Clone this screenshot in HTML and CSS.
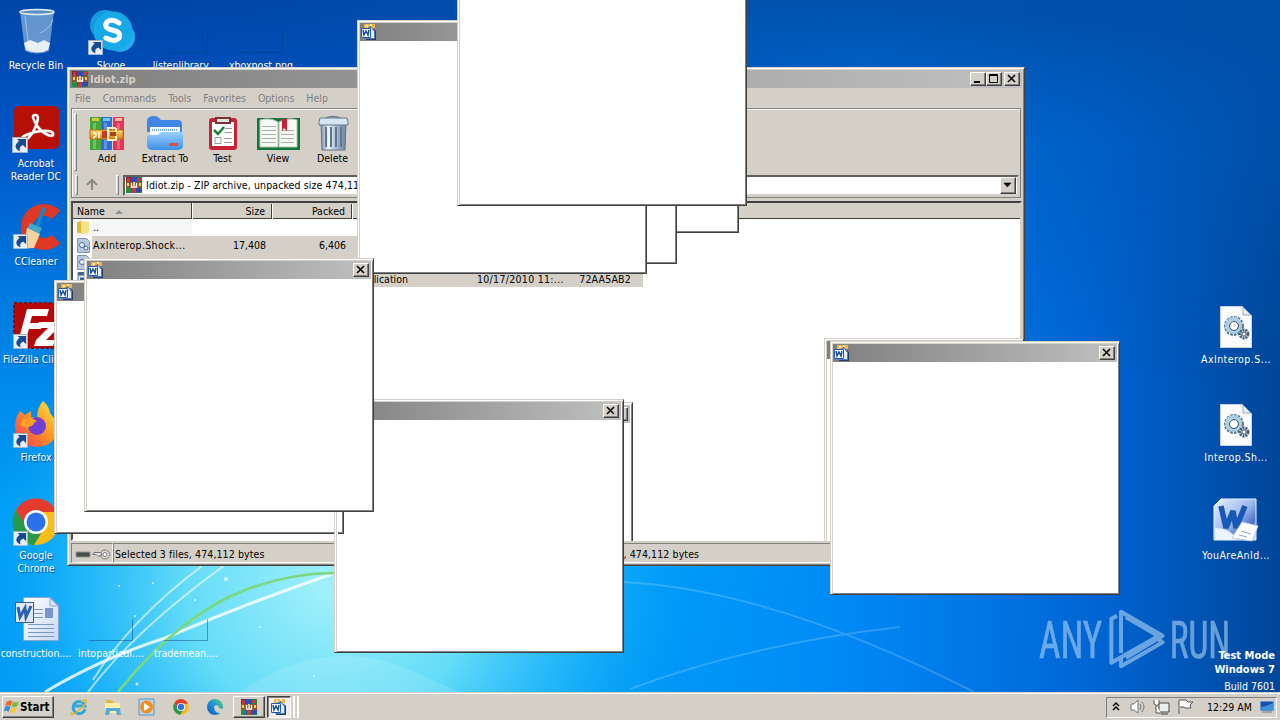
FILE: index.html
```html
<!DOCTYPE html>
<html lang="en">
<head>
<meta charset="utf-8">
<title>Desktop</title>
<link rel="stylesheet" href="styles.css">
</head>
<body>
<svg class="defs" aria-hidden="true">
  <defs>
    <linearGradient id="steel" x1="0" x2="1" y1="0" y2="0"><stop offset="0" stop-color="#7d93ab"/><stop offset=".3" stop-color="#f2f7fc"/><stop offset=".6" stop-color="#a9bdd2"/><stop offset="1" stop-color="#6c839c"/></linearGradient>
    <linearGradient id="folder" x1="0" x2="0" y1="0" y2="1"><stop offset="0" stop-color="#9bd0ff"/><stop offset="1" stop-color="#3d8fe8"/></linearGradient>
    <linearGradient id="edge" x1="0" x2="1" y1="1" y2="0"><stop offset="0" stop-color="#0b55b5"/><stop offset=".5" stop-color="#1894dc"/><stop offset="1" stop-color="#5ad66a"/></linearGradient>
    <linearGradient id="fox" x1="1" x2="0" y1="0" y2="1"><stop offset="0" stop-color="#fff04a"/><stop offset=".45" stop-color="#ff9a20"/><stop offset="1" stop-color="#f0305c"/></linearGradient>
    <linearGradient id="doc" x1="0" x2="1" y1="0" y2="1"><stop offset="0" stop-color="#fff"/><stop offset="1" stop-color="#c6d9f5"/></linearGradient>
    <linearGradient id="wtile" x1="0" x2="1" y1="0" y2="1"><stop offset="0" stop-color="#e8f1ff"/><stop offset=".5" stop-color="#9cb9ed"/><stop offset=".75" stop-color="#4b6fc4"/><stop offset="1" stop-color="#dfe8f8"/></linearGradient>
    <linearGradient id="binding" x1="0" x2="0" y1="0" y2="1"><stop offset="0" stop-color="#ffe06a"/><stop offset="1" stop-color="#d9801c"/></linearGradient>
    <symbol id="arrow" viewBox="0 0 16 16"><path fill="#e9eef5" stroke="#9fb4cc" d="M.5.5h15v15H.5z"/><path fill="#174a93" d="M5 2h9v9l-3-3c-3 1-4 3-3 6-4-1-6-5-3-8 1-1 1-1 2-2z"/></symbol>
    <symbol id="rar" viewBox="0 0 16 16"><path fill="#8e1d2f" d="M0 0h5v16H0z"/><path fill="#2c50b8" d="M5 0h6v16H5z"/><path fill="#218438" d="M11 0h5v16h-5z"/><path fill="#c23c3b" d="M1 1h3v4H1zM6 11h4v5H6zM11 1h4v3h-4z"/><path fill="#219045" d="M0 11h5v5H0z"/><path fill="#2d4bab" d="M11 11h5v4h-5z"/><path fill="#8c5728" d="M0 5h16v6H0z"/><path fill="#f0c774" d="M1 6h2v3H1zM13 6h2v3h-2z"/><path fill="none" stroke="#fff" stroke-width="1.300" d="M5.500 6v4h5V6M8 5v4"/></symbol>
    <symbol id="word" viewBox="0 0 16 16"><path fill="#f4b34c" d="M3 0h11v4H3z"/><path fill="#fff0b5" d="M5 1h2v2H5zM9 0h2v2H9z"/><path fill="#253b65" d="M9 2l6 5v9H5v-2h4z"/><path fill="#e4efff" stroke="#4d7ac5" d="M7.500 3.500h3l3 4v7h-9z"/><path fill="#fff" stroke="#245ab2" d="M.5 4.500h9v9h-9z"/><path fill="none" stroke="#174d9e" stroke-width="1.500" d="M2 6l1 5 2-4 2 4 1-5"/></symbol>
    <symbol id="chrome" viewBox="0 0 48 48"><circle cx="24" cy="24" r="23" fill="#fbbc16"/><path fill="#e33b2e" d="M4 12A23 23 0 0 1 45 14H24L14 30z"/><path fill="#28994b" d="M4 12l12 19 14 3-8 13A23 23 0 0 1 4 12z"/><circle cx="24" cy="24" r="12" fill="#fff"/><circle cx="24" cy="24" r="9.500" fill="#2b72ea"/></symbol>
    <symbol id="gears" viewBox="0 0 32 42"><path fill="#fbfbfb" stroke="#c8d1dc" d="M.5.5h22l9 9v32H.5z"/><path fill="#e8f0f8" stroke="#8eaac6" d="M23 1v8h8z"/><circle cx="14" cy="20" r="8" fill="none" stroke="#5d7892" stroke-width="4" stroke-dasharray="2.400 1"/><circle cx="13.500" cy="19.500" r="6.500" fill="none" stroke="#a9cfe8" stroke-width="4"/><circle cx="14" cy="20" r="4.500" fill="none" stroke="#3f5364"/><circle cx="24" cy="28" r="4" fill="#d8edf8" stroke="#4c6376" stroke-width="3" stroke-dasharray="2 .8"/><circle cx="24" cy="28" r="2" fill="#fff" stroke="#526675"/></symbol>
    <symbol id="minidll" viewBox="0 0 13 15"><path fill="#b9c8e1" stroke="#7e92b5" d="M.5.5h9l3 3v11H.5z"/><circle cx="5" cy="7" r="2.500" fill="#eaf2ff" stroke="#49699c"/><circle cx="9" cy="10" r="2" fill="#eaf2ff" stroke="#49699c"/></symbol>
    <symbol id="close" viewBox="0 0 14 12"><path fill="none" stroke="#000" stroke-width="1.600" d="M3 2l7 7M10 2l-7 7"/></symbol>
  </defs>
</svg>

<main class="desktop">
  <svg class="wallpaper" viewBox="0 0 1280 692" preserveAspectRatio="none">
    <defs>
      <linearGradient id="base" x1="0" y1="0" x2="0" y2="1"><stop offset="0" stop-color="#0045a8"/><stop offset=".2" stop-color="#0056c6"/><stop offset=".45" stop-color="#007ee2"/><stop offset=".75" stop-color="#009ff6"/><stop offset="1" stop-color="#0099f5"/></linearGradient>
      <radialGradient id="glow" gradientUnits="userSpaceOnUse" cx="0" cy="0" r="1" gradientTransform="translate(330 590) scale(360 330)"><stop offset="0" stop-color="#a2f1fb"/><stop offset=".4" stop-color="#64dcf8"/><stop offset=".72" stop-color="#22b9fa" stop-opacity=".75"/><stop offset="1" stop-color="#08a0f8" stop-opacity="0"/></radialGradient>
      <linearGradient id="right"><stop offset=".48" stop-color="#0090ff" stop-opacity="0"/><stop offset=".68" stop-color="#0083f3" stop-opacity=".9"/><stop offset=".86" stop-color="#0064d2"/><stop offset="1" stop-color="#004698"/></linearGradient>
      <linearGradient id="top" gradientUnits="userSpaceOnUse" x1="800" y1="0" x2="770" y2="340"><stop offset="0" stop-color="#0050aa" stop-opacity=".95"/><stop offset=".35" stop-color="#0058b8" stop-opacity=".5"/><stop offset="1" stop-color="#0053b2" stop-opacity="0"/></linearGradient>
      <linearGradient id="fade"><stop offset=".1" stop-color="#000"/><stop offset=".45" stop-color="#fff"/></linearGradient>
      <mask id="soft"><path fill="url(#fade)" d="M0 0h1280v692H0z"/></mask>
    </defs>
    <path fill="url(#base)" d="M0 0h1280v692H0z"/>
    <path fill="url(#right)" d="M0 0h1280v692H0z"/>
    <path fill="url(#top)" mask="url(#soft)" d="M0 0h1280v692H0z"/>
    <path fill="url(#glow)" d="M0 240h700v452H0z"/>
    <path fill="#fff" opacity=".12" d="M240 692q80-55 160-26l60 26z"/>
    <g fill="none" stroke="#fff">
      <path stroke-width="3" opacity=".8" d="M45 692Q100 659 165 638Q250 602 335 573"/>
      <path stroke-width="2" opacity=".6" d="M88 692Q135 630 225 565M93 680Q130 620 202 566"/>
      <path stroke-width="2" opacity=".18" d="M624 582q150 8 350 110M630 689q120-45 270-62"/>
    </g>
    <path fill="none" stroke="#7bd87a" stroke-width="2.500" d="M118 692Q180 615 245 590Q290 573 335 573"/>
    <g fill="#fff" opacity=".75"><circle cx="226" cy="579" r="2"/><circle cx="119" cy="586" r="1"/><circle cx="153" cy="583" r="1"/><circle cx="195" cy="600" r="1"/><circle cx="135" cy="616" r="1"/><circle cx="260" cy="627" r="1"/><circle cx="137" cy="684" r="1.500"/><circle cx="314" cy="676" r="1"/></g>
  </svg>

  <div class="shortcut recycle"><svg viewBox="0 0 48 48"><path fill="#a9c9e4" opacity=".6" d="M8 3h34l-5 40q-12 5-24 0z"/><path fill="#e9eff3" d="M12 35l6-3 8 3 6-3 6 3-2 7q-10 5-22 0z"/><ellipse cx="25" cy="4" rx="17" ry="2.500" fill="#5b8fc0" stroke="#e1ecf2" stroke-width="1.500"/><path fill="none" stroke="#fff" opacity=".4" d="M13 8l4 32M41 11q-3 10-13 14"/></svg><span>Recycle Bin</span></div>
  <div class="shortcut skype"><svg viewBox="0 0 48 48"><circle cx="18" cy="17" r="15" fill="#139ddc"/><circle cx="33" cy="29" r="15" fill="#21adef"/><circle cx="26" cy="23" r="19.500" fill="#17a9e8"/><path fill="none" stroke="#fff" stroke-width="5" stroke-linecap="round" d="M32 15q-7-5-12-1-4 6 5 8 10 2 7 8-4 5-13 0"/><use href="#arrow" x="1" y="32" width="15" height="15"/></svg><span>Skype</span></div>
  <div class="shortcut lib"><i class="ghost"></i><span>listenlibrary....</span></div>
  <div class="shortcut xbox"><i class="ghost"></i><span>xboxpost.png</span></div>
  <div class="shortcut acrobat"><svg viewBox="0 0 48 48"><rect x="2" width="45" height="43" rx="5" fill="#b60f05"/><path fill="none" stroke="#fff" stroke-width="2.600" d="M24 9c4 0 1 10-3 17-5 8-10 10-11 7s10-7 19-8 13 1 12 4-12-2-17-11-3-9 0-9z"/><use href="#arrow" y="31" width="16" height="16"/></svg><span>Acrobat<br>Reader DC</span></div>
  <div class="shortcut ccleaner"><svg viewBox="0 0 48 48"><path fill="none" stroke="#df3925" stroke-width="12" d="M44 11A17 17 0 1 0 44 35"/><path stroke="#1788bd" stroke-width="4" d="M32 4L24 25"/><path fill="#48a5c9" d="M18 19l12 5-3 6-12-5z"/><path fill="#f3d3a0" d="M15 24l13 6-6 14-16 1q8-10 9-21z"/><use href="#arrow" x="1" y="30" width="15" height="15"/></svg><span>CCleaner</span></div>
  <div class="shortcut filezilla"><svg viewBox="0 0 48 48"><path fill="#b50808" stroke="#8c0710" stroke-width="2" stroke-dasharray="3 2" d="M2 1h45v45H2z"/><path fill="#fff" d="M15 7h22l-2 7H20l-2 7h12l-1 6H17l-4 13H6zM27 20h20l-1 6-12 12h9l-2 6H22l2-6 12-12H25z"/><use href="#arrow" x="1" y="32" width="15" height="15"/></svg><span>FileZilla Client</span></div>
  <div class="shortcut firefox"><svg viewBox="0 0 48 48"><path fill="url(#fox)" d="M31 1q6 5 7 12 8 9 7 17-2 16-20 17Q5 46 3 29q-1-9 5-18l5 4 6-4v6l6 1q0-10 6-17z"/><circle cx="25" cy="26" r="9" fill="#713dd2"/><path fill="#ff9e24" d="M11 19q9-2 14 2-3 1-4 4l-6 3-7-3z"/><use href="#arrow" x="1" y="33" width="15" height="15"/></svg><span>Firefox</span></div>
  <div class="shortcut chrome"><svg><use href="#chrome"/><use href="#arrow" x="1" y="33" width="15" height="15"/></svg><span>Google<br>Chrome</span></div>
  <div class="shortcut construction"><svg viewBox="0 0 48 48"><path fill="url(#doc)" stroke="#8ba5d2" d="M11.500 1.500h27l8 8v35h-35z"/><path fill="#dce8f8" stroke="#8ba5d2" d="M38 2v8h8z"/><path fill="none" stroke="#7996c5" d="M16 28.500h26M16 32.500h26M16 36.500h26M16 40.500h26M22 13.500h9M22 17.500h9M22 21.500h9"/><path fill="#7896ce" d="M33 12h8v10h-8z"/><rect x="3.500" y="6.500" width="18" height="20" fill="#dfe9fb" stroke="#345faf"/><path fill="none" stroke="#2e5fae" stroke-width="3" d="M6 11l2 10 5-9 1 9 5-11"/></svg><span>construction....</span></div>
  <div class="shortcut into"><i class="ghost"></i><span>intoparticul....</span></div>
  <div class="shortcut trade"><i class="ghost"></i><span>trademean....</span></div>
  <div class="shortcut file ax"><svg><use href="#gears" x="8" y="4" width="32" height="42"/></svg><span>AxInterop.S...</span></div>
  <div class="shortcut file inter"><svg><use href="#gears" x="8" y="4" width="32" height="42"/></svg><span>Interop.Sh...</span></div>
  <div class="shortcut file idiot"><svg viewBox="0 0 48 48"><path fill="url(#wtile)" stroke="#eaf3ff" d="M9 1h35v41H2V8z"/><path fill="#edf4ff" d="M3 30q15 0 23 12H3z"/><path fill="none" stroke="#1759b5" stroke-width="5.500" stroke-linejoin="bevel" d="M9 8l5 22 7-17 3 17 9-22"/><path fill="#fff" stroke="#c2cfe6" d="M30 24l16 4-6 15-20-3z"/><path stroke="#8da0be" d="M29 33l10 3M27 37l8 2"/></svg><span>YouAreAnId...</span></div>

  <section class="archive">
    <header class="title"><svg class="i16"><use href="#rar"/></svg><b>Idiot.zip</b><div class="controls"><button><svg viewBox="0 0 14 12"><path d="M3 8h6v2H3z"/></svg></button><button><svg viewBox="0 0 14 12"><path fill="none" stroke="#000" d="M2.500 1.500h8v8h-8zM2 2.500h9"/></svg></button><button class="gap"><svg viewBox="0 0 14 12"><use href="#close"/></svg></button></div></header>
    <nav><span>File</span><span>Commands</span><span>Tools</span><span>Favorites</span><span>Options</span><span>Help</span></nav>
    <div class="bars">
      <div class="tools">
        <i class="grip"></i>
        <div class="tool add"><svg viewBox="0 0 36 36"><path fill="#43a837" d="M1 2h11v33H1z"/><path fill="#2d6ed7" d="M12 2h11v33H12z"/><path fill="#e73354" d="M24 2h11v33H24z"/><path fill="#d6ca40" d="M3 3h7v3H3z"/><path fill="#68ceff" d="M14 3h7v3h-7z"/><path fill="#ffc0a4" d="M26 3h7v3h-7z"/><path fill="#fff" opacity=".25" d="M4 8h3v26H4zM15 8h3v26h-3zM28 8h3v26h-3z"/><path fill="url(#binding)" stroke="#bd6c12" d="M1 15h33v9H1z"/><path fill="#c23b22" d="M13 16h6v7h-6z"/><path fill="none" stroke="#fff0bc" stroke-width="2" d="M4 17q6 3 0 6M10 17v6M27 13h-8v12h8v-4M27 13v4"/><path fill="#9d481e" d="M21 17h6v4h-6z"/></svg><span>Add</span></div>
        <div class="tool extract"><svg viewBox="0 0 36 36"><path fill="#3f86e5" d="M0 5q1-4 7-4 4 0 7 4h18q3 1 3 4v8H0z"/><path fill="#f3fbff" d="M3 12h30v12H3z"/><path stroke="#79add9" stroke-width="2" stroke-dasharray="1 1" d="M5 15h26"/><path fill="url(#folder)" d="M0 20h11l3-3h22v14q-1 4-5 4H5q-4 0-5-4z"/><path fill="#dc503d" d="M22 28h9v3h-9z"/></svg><span>Extract To</span></div>
        <div class="tool test"><svg viewBox="0 0 36 36"><rect x="4" y="3" width="28" height="32" rx="3" fill="#c92238"/><path fill="#fff" d="M7 7h22v24H7z"/><path fill="#7b3036" d="M10 2h16v7H10z"/><path fill="#dfe4e6" d="M12 4h12v3H12z"/><path fill="none" stroke="#16813f" stroke-width="2.500" d="M9 15l4 4 6-7"/><path fill="none" stroke="#909b9c" d="M20 13.500h7M20 17.500h7M19 23.500h8M19 27.500h8M10 22.500h6v6h-6z"/></svg><span>Test</span></div>
        <div class="tool view"><svg viewBox="0 0 43 36"><path fill="#127641" d="M0 3h43v32H0z"/><path fill="#f7f9f3" stroke="#bcc4b5" d="M3 5q10-3 18 2v25H3zM22 7q9-5 18-2v27H22z"/><path stroke="#a7b1a9" d="M5 11.500h14M5 15.500h14M5 19.500h14M5 23.500h14M5 27.500h14M24 15.500h13M24 19.500h13M24 23.500h13M24 27.500h13"/><path fill="#c72138" d="M25 4h5v12l-3-3-2 3z"/></svg><span>View</span></div>
        <div class="tool delete"><svg viewBox="0 0 36 36"><path fill="none" stroke="#66778a" stroke-width="1.500" d="M11 3q7-3 14 0"/><path fill="url(#steel)" stroke="#60758b" d="M6 8h25l-1 27H7z"/><path fill="#d6e5f2" stroke="#64788d" d="M5 3h27l1 4v3H4V7z"/><path stroke="#5e758d" stroke-width="2" d="M11 12v20M16 12v20M21 12v20M26 12v20"/></svg><span>Delete</span></div>
      </div>
      <div class="path"><i class="grip"></i><svg class="up" viewBox="0 0 14 14"><path fill="none" stroke="#8b8984" stroke-width="2" d="M7 12V3M2 7l5-5 5 5"/></svg><i class="grip second"></i><div class="address"><svg class="i16"><use href="#rar"/></svg><span>Idiot.zip - ZIP archive, unpacked size 474,112 bytes</span><button><svg viewBox="0 0 12 12"><path d="M2 4h7L5.500 8z"/></svg></button></div></div>
    </div>
    <div class="list">
      <div class="row head"><span>Name <i class="sort"></i></span><span>Size</span><span>Packed</span></div>
      <div class="row first"><span><svg viewBox="0 0 14 15"><path fill="#dfb839" d="M0 2l5-2v14l-5-1z"/><path fill="#f6e385" d="M4 1h9v12l-8 2z"/></svg>..</span></div>
      <div class="row selected"><span class="long"><svg><use href="#minidll"/></svg>AxInterop.Shock...</span><span>17,408</span><span>6,406</span></div>
      <div class="row selected"><span class="long"><svg><use href="#minidll"/></svg>Interop.Shock...</span></div>
      <div class="row selected last"><span><svg viewBox="0 0 13 14"><path fill="#dce8f4" stroke="#557393" d="M1 1h11v12H1z"/><path fill="#3d6390" d="M1 1h11v3H1zM3 6h6v5H3z"/></svg></span><span></span><span></span><span class="type">Application</span><span class="date">10/17/2010 11:...</span><span class="crc">72AA5AB2</span></div>
    </div>
    <footer><div class="state"><svg viewBox="0 0 38 14"><rect x="3" y="5" width="14" height="5" rx="1" fill="#435148" stroke="#929292"/><g fill="#ddd" stroke="#777"><circle cx="32" cy="7.500" r="4.500"/><circle cx="32" cy="7.500" r="2" fill="#fff"/><path d="M28 5.500h-7l-1 2h3l2 2 2-1h2z"/></g></svg></div><div class="count">Selected 3 files, 474,112 bytes</div><div class="total">Total 3 files, 474,112 bytes</div></footer>
  </section>

  <section class="popup p-side"><header><button></button></header></section>
  <section class="popup p-d"></section>
  <section class="popup p-c"></section>
  <section class="popup p-a"><header><svg class="i16"><use href="#word"/></svg></header></section>
  <section class="popup p-b"></section>
  <section class="popup p-f"><header><svg class="i16"><use href="#word"/></svg></header></section>
  <section class="popup p-g"><header><button><svg viewBox="0 0 14 12"><use href="#close"/></svg></button></header></section>
  <i class="fragment"></i>
  <section class="popup p-e"><header><svg class="i16"><use href="#word"/></svg><button><svg viewBox="0 0 14 12"><use href="#close"/></svg></button></header></section>
  <section class="popup p-j"><header></header></section>
  <section class="popup p-i"><header><svg class="i16"><use href="#word"/></svg><button><svg viewBox="0 0 14 12"><use href="#close"/></svg></button></header></section>

  <svg class="brand" viewBox="0 0 600 210"><g fill="#b7d7f5" stroke="#b7d7f5" stroke-width="2" font-family="Roboto" font-size="156"><text x="0" y="148" textLength="190" lengthAdjust="spacingAndGlyphs">ANY</text><text x="392" y="148" textLength="182" lengthAdjust="spacingAndGlyphs">RUN</text></g><g fill="none" stroke="#b7d7f5" stroke-width="12" stroke-linejoin="round"><path d="M234 20l-17 9v132l141-80-98-57"/><path d="M246 132V8l125 72-110 66M246 146v26l125-72-12-8"/></g></svg>
  <div class="testmode"><b>Test Mode</b><b>Windows 7</b><span>Build 7601</span></div>
</main>

<div class="taskbar">
  <button class="start"><svg viewBox="0 0 16 16"><path fill="#ed6829" d="M3 2q4-2 6 0L7 7Q5 5 1 7z"/><path fill="#79bd37" d="M10 2q3 2 6 0l-2 5q-3 2-6 0z"/><path fill="#388fdd" d="M1 8q3-2 6 0l-2 5q-3-2-5 0z"/><path fill="#f8c73b" d="M8 8q3 2 6 0l-2 6q-3 1-6-1z"/></svg><b>Start</b></button>
  <div class="quick">
    <svg viewBox="0 0 18 18"><path fill="none" stroke="#31a7df" stroke-width="3" d="M15 11a6 6 0 1 1 0-3H5"/><path fill="none" stroke="#e2b632" stroke-width="1.500" d="M2 14c-3 4 1 3 6-1 7-6 11-11 7-11l-4 2"/></svg>
    <svg viewBox="0 0 18 18"><path fill="#e5b54e" d="M2 2h6l2 3h6v5H2z"/><path fill="#fff0a6" d="M1 5h15v10H1z"/><path fill="#55acd5" d="M2 10h14l1 7h-4l-1-4H6l-1 4H1z"/></svg>
    <svg viewBox="0 0 18 18"><path fill="#b9d5eb" stroke="#5796c6" d="M1 1h15v16H1z"/><circle cx="8.500" cy="9" r="6.500" fill="#f68c1f"/><path fill="#fff" d="M6 5l6 4-6 4z"/></svg>
    <svg><use href="#chrome" x="1" y="1" width="16" height="16"/></svg>
    <svg viewBox="0 0 18 18"><circle cx="9" cy="9" r="8" fill="url(#edge)"/><path fill="#d4d0c8" d="M8 8q5-2 5 2l4 1q0 3-2 4-7 1-7-7z"/></svg>
  </div>
  <button class="task"><svg class="i16"><use href="#rar"/></svg></button>
  <button class="task active"><svg class="i16"><use href="#word"/></svg></button><i class="sliver"></i><i class="sliver"></i>
  <div class="tray"><svg class="chevrons" viewBox="0 0 8 12"><path fill="none" stroke="#000" stroke-width="1.500" d="M1 5l3-3 3 3M1 9l3-3 3 3"/></svg><svg class="ti" viewBox="0 0 18 16"><path fill="#fff" stroke="#777" d="M2 5h3l4-4v13l-4-3H2z"/><path fill="none" stroke="#777" d="M11 5q2 3 0 6M13 3q4 5 0 10"/></svg><svg class="ti" viewBox="0 0 18 16"><path fill="#eee" stroke="#444" d="M6 4h10v9H6zM8 15h7"/><path fill="#fff" stroke="#555" d="M1 1v4q3 3 5 0V1M3 6v8h5"/></svg><svg class="ti" viewBox="0 0 18 16"><path fill="#fff" stroke="#555" d="M2 15V1h7l2 2h5l-3 3 1 3H8L7 8H3"/></svg><span>12:29 AM</span><svg class="show" viewBox="0 0 16 14"><path fill="#164ea9" stroke="#b9d6ed" d="M1 1h14v10H1z"/><path fill="#3e91d8" d="M2 7q6-1 12-4v7H2z"/><path stroke="#777" d="M3 12h10"/></svg></div>
</div>
</body>
</html>
```
FILE: styles.css
```css
* { box-sizing: border-box; }
body {
  margin: 0;
  width: 1280px;
  height: 720px;
  overflow: hidden;
  display: flex;
  flex-direction: column;
  font: 10.5px/13px "DejaVu Sans Condensed", "DejaVu Sans", sans-serif;
  font-stretch: condensed;
  color: #000;
}
svg { display: block; flex: none; }
span { white-space: nowrap; }
button {
  padding: 0;
  font: inherit;
  background: #d4d0c8;
  border: 1px solid;
  border-color: #fff #404040 #404040 #fff;
  box-shadow: inset -1px -1px #808080;
}
.defs { position: absolute; width: 0; height: 0; }
.i16 { width: 16px; height: 16px; }
.desktop { position: relative; height: 692px; overflow: hidden; flex: none; }
.wallpaper { position: absolute; inset: 0; width: 1280px; height: 692px; }

.shortcut {
  position: absolute;
  width: 76px;
  display: flex;
  flex-direction: column;
  align-items: center;
  gap: 3px;
  color: #fff;
  text-align: center;
  text-shadow: 1px 1px 1px #0348a0;
}
.shortcut svg { width: 48px; height: 48px; }
.file { letter-spacing: .45px; }
.ghost { width: 44px; height: 22px; margin: 23px 0 3px; border: solid #06397870; border-width: 0 1px 1px 0; }
.recycle { left: -2px; top: 8px; }
.skype { left: 73px; top: 8px; }
.lib { left: 148px; top: 8px; }
.xbox { left: 223px; top: 8px; }
.acrobat { left: -2px; top: 106px; }
.ccleaner { left: -2px; top: 204px; }
.filezilla { left: -2px; top: 302px; }
.firefox { left: -2px; top: 400px; }
.chrome { left: -2px; top: 498px; }
.construction { left: -2px; top: 596px; }
.into { left: 73px; top: 596px; }
.trade { left: 148px; top: 596px; }
.ax { left: 1198px; top: 302px; }
.inter { left: 1198px; top: 400px; }
.idiot { left: 1198px; top: 498px; }
.into, .trade, .construction { text-shadow: none; }

.archive {
  position: absolute;
  left: 67px;
  top: 67px;
  width: 958px;
  height: 499px;
  padding: 2px;
  display: flex;
  flex-direction: column;
  background: #d4d0c8;
  border: 1px solid;
  border-color: #d4d0c8 #404040 #404040 #d4d0c8;
  box-shadow: inset 1px 1px #fff, inset -1px -1px #808080;
}
.title {
  display: flex;
  align-items: center;
  height: 18px;
  padding: 0 2px;
  background: linear-gradient(90deg, #808080, #c0c0c0);
  color: #d4d0c8;
  font-size: 11px;
}
.title b { margin-left: 2px; }
.controls { display: flex; margin-left: auto; }
.controls button { width: 16px; height: 14px; }
.controls .gap { margin-left: 2px; }
nav { display: flex; gap: 12px; height: 20px; padding: 4px 5px; color: #808080; }
.bars { height: 90px; margin: 0 1px; border: 1px solid #808080; box-shadow: inset 1px 1px #fff; }
.tools { display: flex; height: 65px; padding: 4px 3px 0 2px; }
.grip { width: 3px; height: 58px; border: 1px solid; border-color: #fff #808080 #808080 #fff; flex: none; }
.tool { display: flex; flex-direction: column; align-items: center; height: 60px; padding-top: 2px; }
.tool svg { height: 36px; width: 36px; }
.tool span { line-height: 15px; }
.add { width: 60px; }
.extract { width: 56px; }
.test { width: 59px; }
.view { width: 52px; }
.view svg { width: 43px; }
.delete { width: 57px; }
.path { display: flex; align-items: center; height: 22px; padding: 0 1px 0 3px; }
.path .grip { height: 20px; }
.up { width: 14px; height: 14px; margin: 0 17px 0 7px; }
.address { display: flex; align-items: center; flex: 1; height: 21px; margin-left: 4px; padding: 1px; background: #fff; border: 2px solid; border-color: #606060 #d4d0c8 #d4d0c8 #606060; }
.address span { margin-left: 4px; letter-spacing: .1px; }
.address button { width: 16px; height: 17px; margin-left: auto; }
.list { margin: 3px 0 0 1px; height: 340px; border: 2px solid; border-color: #404040 #d4d0c8 #fff #505050; background: #fff; overflow: hidden; }
.row { display: grid; grid-template-columns: 119px 80px 80px 120px 94px 77px; height: 17px; width: 570px; align-items: center; }
.row > span { text-align: right; padding: 1px 6px 0 0; }
.row > span:first-child { display: flex; align-items: center; gap: 3px; padding: 0 0 0 4px; text-align: left; height: 17px; }
.row > .long:first-child { letter-spacing: .35px; padding-top: 1px; }
.row svg { width: 13px; height: 15px; }
.head { width: auto; height: 16px; background: #d4d0c8; border-bottom: 1px solid #404040; }
.head > span { height: 15px; line-height: 15px; padding-top: 0; border-right: 1px solid #404040; box-shadow: 1px 0 #fff; }
.sort { margin-left: 7px; border: 4px solid transparent; border-top: 0; border-bottom-color: #909090; }
.first > span { background: #f7f7f7; }
.selected { background: linear-gradient(90deg, #fff 19px, #d4d0c8 19px); }
.row .type { text-align: right; padding-right: 64px; }
.row .date { text-align: left; padding-left: 5px; padding-right: 0; letter-spacing: .3px; }
.row .crc { padding-right: 12px; letter-spacing: .2px; }
footer { display: flex; height: 20px; margin: 2px 2px 0 1px; }
.state, .count, .total { border: 1px solid; border-color: #808080 #fff #fff #808080; padding: 4px 1px; line-height: 12px; white-space: nowrap; letter-spacing: .1px; }
.state { width: 42px; padding: 3px 1px; }
.state svg { width: 38px; height: 14px; }
.count { width: 454px; }
.total { flex: 1; }

.popup {
  position: absolute;
  width: 290px;
  height: 254px;
  padding: 2px;
  background: #fff;
  border: 1px solid;
  border-color: #d4d0c8 #404040 #404040 #d4d0c8;
  box-shadow: inset 1px 1px #fff, inset 2px 2px #d4d0c8, inset -1px -1px #808080;
}
.popup header { display: flex; align-items: center; height: 18px; padding: 0 2px 0 1px; background: linear-gradient(90deg, #808080, #c0c0c0); }
.popup header button { width: 16px; height: 14px; margin-left: auto; }
.p-a { left: 357px; top: 20px; }
.p-b { left: 457px; top: -48px; }
.p-c { left: 487px; top: 100px; width: 190px; height: 164px; }
.p-d { left: 499px; top: 50px; width: 240px; height: 183px; }
.p-e { left: 84px; top: 258px; }
.p-f { left: 54px; top: 280px; }
.p-g { left: 334px; top: 399px; }
.p-side { left: 343px; top: 402px; height: 139px; border-bottom: 0; box-shadow: inset 1px 1px #fff, inset -1px 0 #808080; }
.p-i { left: 830px; top: 341px; }
.p-j { left: 824px; top: 338px; width: 200px; height: 203px; border-bottom: 0; box-shadow: inset 1px 1px #fff, inset 2px 2px #d4d0c8; }
.fragment { position: absolute; left: 338px; top: 511px; width: 6px; height: 23px; border: solid #404040; border-width: 0 1px 1px 0; box-shadow: inset -1px -1px #808080; }
.brand { position: absolute; left: 1039px; top: 609px; width: 200px; height: 70px; opacity: .58; overflow: visible; }
.testmode { position: absolute; right: 5px; top: 649px; display: flex; flex-direction: column; align-items: flex-end; font-size: 11px; line-height: 14px; color: #fff; }
.testmode span { font-size: 10.5px; line-height: 18px; }

.taskbar { display: flex; align-items: center; height: 28px; flex: none; padding: 2px 3px 0 2px; background: #d4d0c8; box-shadow: inset 0 1px #d4d0c8, inset 0 2px #fff; }
.start { display: flex; align-items: center; width: 52px; height: 22px; padding: 0 1px; font-size: 11.5px; }
.start svg { width: 15px; height: 16px; margin-right: 1px; }
.quick { display: flex; gap: 16px; margin-left: 16px; }
.quick svg { width: 18px; height: 18px; }
.task { display: grid; place-items: center; width: 32px; height: 22px; margin-left: 9px; }
.active { width: 24px; margin-left: 2px; background: #eeece8; border-color: #404040 #fff #fff #404040; box-shadow: inset 1px 1px #808080; }
.sliver { width: 4px; height: 22px; border-right: 2px solid #fff; }
.tray { display: flex; align-items: center; width: 171px; height: 21px; margin-left: auto; padding: 0 1px 0 5px; border: 1px solid; border-color: #808080 #fff #fff #808080; }
.chevrons { width: 8px; height: 12px; margin-right: 9px; }
.ti { width: 18px; height: 16px; margin-right: 6px; }
.tray span { margin: 0 0 0 6px; }
.show { width: 16px; height: 14px; margin-left: auto; }
```
